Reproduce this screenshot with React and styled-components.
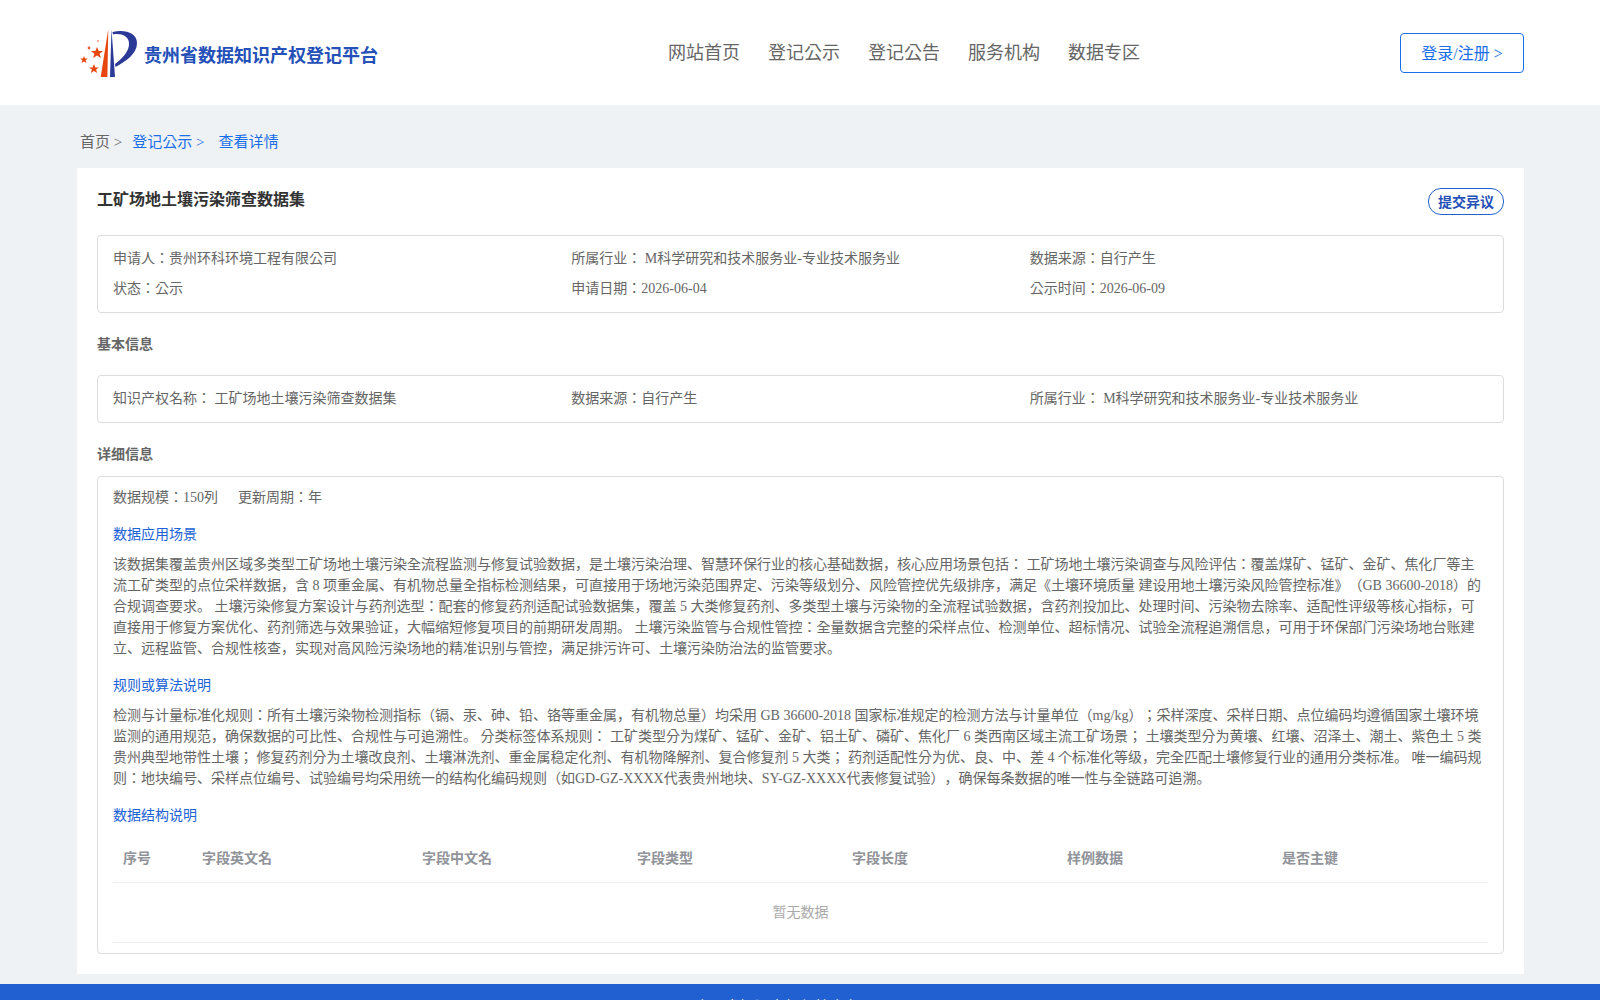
import React from "react";
import styled, { createGlobalStyle } from "styled-components";

const basicRows = [
  ["申请人：贵州环科环境工程有限公司", "所属行业： M科学研究和技术服务业-专业技术服务业", "数据来源：自行产生"],
  ["状态：公示", "申请日期：2026-06-04", "公示时间：2026-06-09"],
];
const ipRows = [["知识产权名称： 工矿场地土壤污染筛查数据集", "数据来源：自行产生", "所属行业： M科学研究和技术服务业-专业技术服务业"]];
const navItems = ["网站首页", "登记公示", "登记公告", "服务机构", "数据专区"];
const columns = ["序号", "字段英文名", "字段中文名", "字段类型", "字段长度", "样例数据", "是否主键"];
const columnWidths = ["79px", "220px", "215px", "215px", "215px", "215px", "216px"];

const sceneText =
  "该数据集覆盖贵州区域多类型工矿场地土壤污染全流程监测与修复试验数据，是土壤污染治理、智慧环保行业的核心基础数据，核心应用场景包括： 工矿场地土壤污染调查与风险评估：覆盖煤矿、锰矿、金矿、焦化厂等主流工矿类型的点位采样数据，含 8 项重金属、有机物总量全指标检测结果，可直接用于场地污染范围界定、污染等级划分、风险管控优先级排序，满足《土壤环境质量 建设用地土壤污染风险管控标准》（GB 36600-2018）的合规调查要求。 土壤污染修复方案设计与药剂选型：配套的修复药剂适配试验数据集，覆盖 5 大类修复药剂、多类型土壤与污染物的全流程试验数据，含药剂投加比、处理时间、污染物去除率、适配性评级等核心指标，可直接用于修复方案优化、药剂筛选与效果验证，大幅缩短修复项目的前期研发周期。 土壤污染监管与合规性管控：全量数据含完整的采样点位、检测单位、超标情况、试验全流程追溯信息，可用于环保部门污染场地台账建立、远程监管、合规性核查，实现对高风险污染场地的精准识别与管控，满足排污许可、土壤污染防治法的监管要求。";
const ruleText =
  "检测与计量标准化规则：所有土壤污染物检测指标（镉、汞、砷、铅、铬等重金属，有机物总量）均采用 GB 36600-2018 国家标准规定的检测方法与计量单位（mg/kg）；采样深度、采样日期、点位编码均遵循国家土壤环境监测的通用规范，确保数据的可比性、合规性与可追溯性。 分类标签体系规则： 工矿类型分为煤矿、锰矿、金矿、铝土矿、磷矿、焦化厂 6 类西南区域主流工矿场景； 土壤类型分为黄壤、红壤、沼泽土、潮土、紫色土 5 类贵州典型地带性土壤； 修复药剂分为土壤改良剂、土壤淋洗剂、重金属稳定化剂、有机物降解剂、复合修复剂 5 大类； 药剂适配性分为优、良、中、差 4 个标准化等级，完全匹配土壤修复行业的通用分类标准。 唯一编码规则：地块编号、采样点位编号、试验编号均采用统一的结构化编码规则（如GD-GZ-XXXX代表贵州地块、SY-GZ-XXXX代表修复试验），确保每条数据的唯一性与全链路可追溯。";

function Logo() {
  return (
    <LogoMark viewBox="0 0 58 50" aria-hidden="true">
      <path d="M28.3 1 L27.4 49 L20.7 49 Z" fill="#e8460f" />
      <path d="M31.5 1 L35 49 L30 49 Z" fill="#2b3a96" />
      <path
        d="M32.5 4 C45 1 57 5 57 15 C57 26 46 33 35.5 39 L35 36 C43 30 49.5 23 49 15 C48.5 8 41 5 33 6.5 Z"
        fill="#2b3a96"
      />
      <polygon fill="#e8460f" points="17,19 18.7,23 23,23 19.6,25.8 20.9,30 17,27.5 13.1,30 14.4,25.8 11,23 15.3,23" />
      <polygon fill="#e8460f" points="4,28 5,30.5 7.8,30.5 5.6,32.2 6.4,35 4,33.4 1.6,35 2.4,32.2 0.2,30.5 3,30.5" />
      <polygon fill="#e8460f" points="14,36 15.4,39.4 19,39.4 16.1,41.6 17.2,45 14,43 10.8,45 11.9,41.6 9,39.4 12.6,39.4" />
      <circle cx="9" cy="20" r="1.4" fill="#e8603a" />
      <circle cx="18" cy="13" r="0.9" fill="#ee8a66" />
    </LogoMark>
  );
}

function InfoRows({ rows }) {
  return (
    <InfoBox>
      {rows.map((row, i) => (
        <InfoRow key={i}>
          {row.map((text) => (
            <span key={text}>{text}</span>
          ))}
        </InfoRow>
      ))}
    </InfoBox>
  );
}

export default function App() {
  return (
    <>
      <GlobalStyle />
      <Header>
        <Brand>
          <Logo />
          <BrandName>贵州省数据知识产权登记平台</BrandName>
        </Brand>
        <Nav>
          {navItems.map((item) => (
            <NavLink key={item}>{item}</NavLink>
          ))}
        </Nav>
        <LoginButton>登录/注册 &gt;</LoginButton>
      </Header>
      <Main>
        <Breadcrumb>
          <Crumb>首页 &gt;</Crumb>
          <Crumb $active $gap="10px">登记公示 &gt;</Crumb>
          <Crumb $active $gap="14px">查看详情</Crumb>
        </Breadcrumb>
        <Card>
          <TitleRow>
            <Title>工矿场地土壤污染筛查数据集</Title>
            <ObjectionButton>提交异议</ObjectionButton>
          </TitleRow>
          <InfoRows rows={basicRows} />
          <SectionTitle>基本信息</SectionTitle>
          <InfoRows rows={ipRows} />
          <SectionTitle $detail>详细信息</SectionTitle>
          <DetailBox>
            <Meta>
              <span>数据规模：150列</span>
              <span>更新周期：年</span>
            </Meta>
            <BlueTitle>数据应用场景</BlueTitle>
            <Paragraph>{sceneText}</Paragraph>
            <BlueTitle>规则或算法说明</BlueTitle>
            <Paragraph>{ruleText}</Paragraph>
            <BlueTitle>数据结构说明</BlueTitle>
            <FieldTable>
              <colgroup>
                {columnWidths.map((w, i) => (
                  <col key={i} width={w} />
                ))}
              </colgroup>
              <thead>
                <tr>
                  {columns.map((c) => (
                    <HeadCell key={c}>{c}</HeadCell>
                  ))}
                </tr>
              </thead>
              <tbody>
                <tr>
                  <EmptyCell colSpan={7}>暂无数据</EmptyCell>
                </tr>
              </tbody>
            </FieldTable>
          </DetailBox>
        </Card>
      </Main>
      <Footer>©贵州省知识产权保护中心</Footer>
    </>
  );
}

const GlobalStyle = createGlobalStyle`
  body {
    margin: 0;
    background: #eff2f5;
    font-family: "Liberation Serif", "Noto Sans CJK KR", serif;
    color: #666;
    text-spacing-trim: space-all;
  }
`;

const Header = styled.header`
  display: flex;
  align-items: center;
  height: 105px;
  padding: 0 76px 0 80px;
  background: #fff;
`;

const Brand = styled.div`
  display: flex;
  align-items: center;
  width: 298px;
  margin-top: 1px;
`;

const LogoMark = styled.svg`
  width: 58px;
  height: 50px;
  margin-right: 6px;
  flex-shrink: 0;
  overflow: visible;
`;

const BrandName = styled.span`
  margin-top: 2px;
  font-size: 18px;
  font-weight: 700;
  color: #2450b8;
  white-space: nowrap;
`;

const Nav = styled.nav`
  display: flex;
  gap: 28px;
  margin-left: 290px;
`;

const NavLink = styled.a`
  font-size: 18px;
  line-height: 30px;
  color: #666;
`;

const LoginButton = styled.button`
  width: 124px;
  height: 40px;
  margin-left: auto;
  padding: 0 0 2px;
  background: #fff;
  border: 1px solid #1a6fe8;
  border-radius: 4px;
  font-family: inherit;
  font-size: 16px;
  color: #1a6fe8;
`;

const Main = styled.main`
  padding: 0 76px 10px 77px;
`;

const Breadcrumb = styled.div`
  display: flex;
  align-items: center;
  height: 63px;
  padding: 8px 0 0 3px;
  box-sizing: border-box;
`;

const Crumb = styled.span`
  margin-left: ${(p) => p.$gap || 0};
  font-size: 15px;
  color: ${(p) => (p.$active ? "#1a6fe8" : "#666")};
`;

const Card = styled.section`
  padding: 20px 20px 20px;
  background: #fff;
`;

const TitleRow = styled.div`
  display: flex;
  justify-content: space-between;
  align-items: flex-start;
  height: 27px;
  margin-bottom: 20px;
`;

const Title = styled.h1`
  margin: 0;
  font-size: 16px;
  line-height: 24px;
  font-weight: 700;
  color: #333;
`;

const ObjectionButton = styled.button`
  width: 76px;
  height: 27px;
  padding: 0 0 2px;
  background: #fff;
  border: 1px solid #2160d0;
  border-radius: 13px;
  font-family: inherit;
  font-size: 14px;
  font-weight: 700;
  color: #2450b8;
`;

const InfoBox = styled.div`
  padding: 8px 15px;
  border: 1px solid #ddd;
  border-radius: 4px;
`;

const InfoRow = styled.div`
  display: grid;
  grid-template-columns: repeat(3, 1fr);
  font-size: 14px;
  line-height: 30px;
`;

const SectionTitle = styled.h2`
  margin: ${(p) => (p.$detail ? "21px 0 10px" : "21px 0 19px")};
  font-size: 14px;
  line-height: 22px;
  font-weight: 700;
  color: #666;
`;

const DetailBox = styled.div`
  padding: 10px 15px;
  border: 1px solid #ddd;
  border-radius: 4px;
  font-size: 14px;
  line-height: 21px;
`;

const Meta = styled.div`
  display: flex;
  gap: 20px;
`;

const BlueTitle = styled.div`
  margin: 16px 0 9px;
  color: #1a62d6;
`;

const Paragraph = styled.p`
  margin: 0;
`;

const FieldTable = styled.table`
  width: 100%;
  margin-top: -1px;
  border-collapse: collapse;
  table-layout: fixed;
`;

const HeadCell = styled.th`
  height: 48px;
  padding: 0 10px;
  border-bottom: 1px solid #ebeef5;
  text-align: left;
  font-weight: 700;
  color: #909399;
`;

const EmptyCell = styled.td`
  height: 59px;
  padding: 0;
  border-bottom: 1px solid #ebeef5;
  text-align: center;
  color: #aaa;
`;

const Footer = styled.footer`
  height: 50px;
  padding: 13px 57px 0 0;
  box-sizing: border-box;
  background: #2160d0;
  text-align: center;
  font-size: 15px;
  line-height: 20px;
  color: #fff;
`;
